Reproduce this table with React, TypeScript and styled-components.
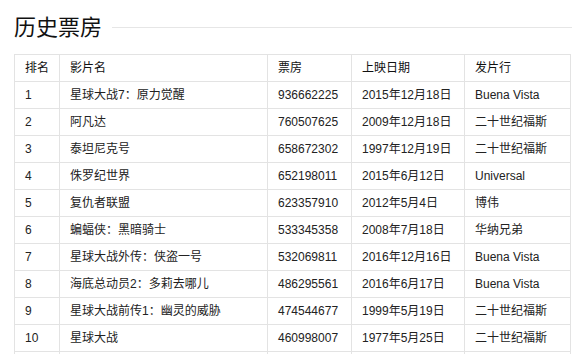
import React from "react";
import styled, { createGlobalStyle } from "styled-components";

const Global = createGlobalStyle`
  html, body { margin: 0; padding: 0; background: #fff; }
  body { font-family: "Liberation Sans", "Noto Sans CJK SC", sans-serif; color: #333; }
`;

const Page = styled.div`
  padding: 14px 1px 0 14px;
`;

const Header = styled.div`
  display: flex;
  align-items: center;
  gap: 10px;
  height: 28px;
  margin-bottom: 12px;
`;

const Title = styled.h2`
  margin: 0;
  font-size: 22px;
  line-height: 28px;
  font-weight: normal;
  color: #111;
  white-space: nowrap;
`;

const Rule = styled.div`
  flex: 1;
  height: 1px;
  background: #e6e6e6;
  margin-top: -1px;
`;

const Table = styled.table`
  border-collapse: collapse;
  table-layout: fixed;
  width: 556px;
  font-size: 12px;
`;

const Cell = styled.td<{ $head?: boolean }>`
  border: 1px solid #e3e3e3;
  height: 26px;
  padding: 0 0 0 10px;
  box-sizing: border-box;
  vertical-align: middle;
  text-align: left;
  white-space: nowrap;
  overflow: hidden;
  font-weight: normal;
  color: ${(p) => (p.$head ? "#111" : "#222")};
  line-height: 26px;
`;

const widths = [45, 208, 84, 113, 106];
const headers = ["排名", "影片名", "票房", "上映日期", "发片行"];

const rows: [string, string, string, string, string][] = [
  ["1", "星球大战7：原力觉醒", "936662225", "2015年12月18日", "Buena Vista"],
  ["2", "阿凡达", "760507625", "2009年12月18日", "二十世纪福斯"],
  ["3", "泰坦尼克号", "658672302", "1997年12月19日", "二十世纪福斯"],
  ["4", "侏罗纪世界", "652198011", "2015年6月12日", "Universal"],
  ["5", "复仇者联盟", "623357910", "2012年5月4日", "博伟"],
  ["6", "蝙蝠侠：黑暗骑士", "533345358", "2008年7月18日", "华纳兄弟"],
  ["7", "星球大战外传：侠盗一号", "532069811", "2016年12月16日", "Buena Vista"],
  ["8", "海底总动员2：多莉去哪儿", "486295561", "2016年6月17日", "Buena Vista"],
  ["9", "星球大战前传1：幽灵的威胁", "474544677", "1999年5月19日", "二十世纪福斯"],
  ["10", "星球大战", "460998007", "1977年5月25日", "二十世纪福斯"],
  ["11", "复仇者联盟2：奥创纪元", "459005868", "2015年5月1日", "Buena Vista"],
];

export default function App() {
  return (
    <Page>
      <Global />
      <Header>
        <Title>历史票房</Title>
        <Rule />
      </Header>
      <Table>
        <colgroup>
          {widths.map((w, i) => (
            <col key={i} style={{ width: w }} />
          ))}
        </colgroup>
        <thead>
          <tr>
            {headers.map((h) => (
              <Cell as="th" $head key={h}>
                {h}
              </Cell>
            ))}
          </tr>
        </thead>
        <tbody>
          {rows.map((r) => (
            <tr key={r[0]}>
              {r.map((c, i) => (
                <Cell key={i}>{c}</Cell>
              ))}
            </tr>
          ))}
        </tbody>
      </Table>
    </Page>
  );
}
